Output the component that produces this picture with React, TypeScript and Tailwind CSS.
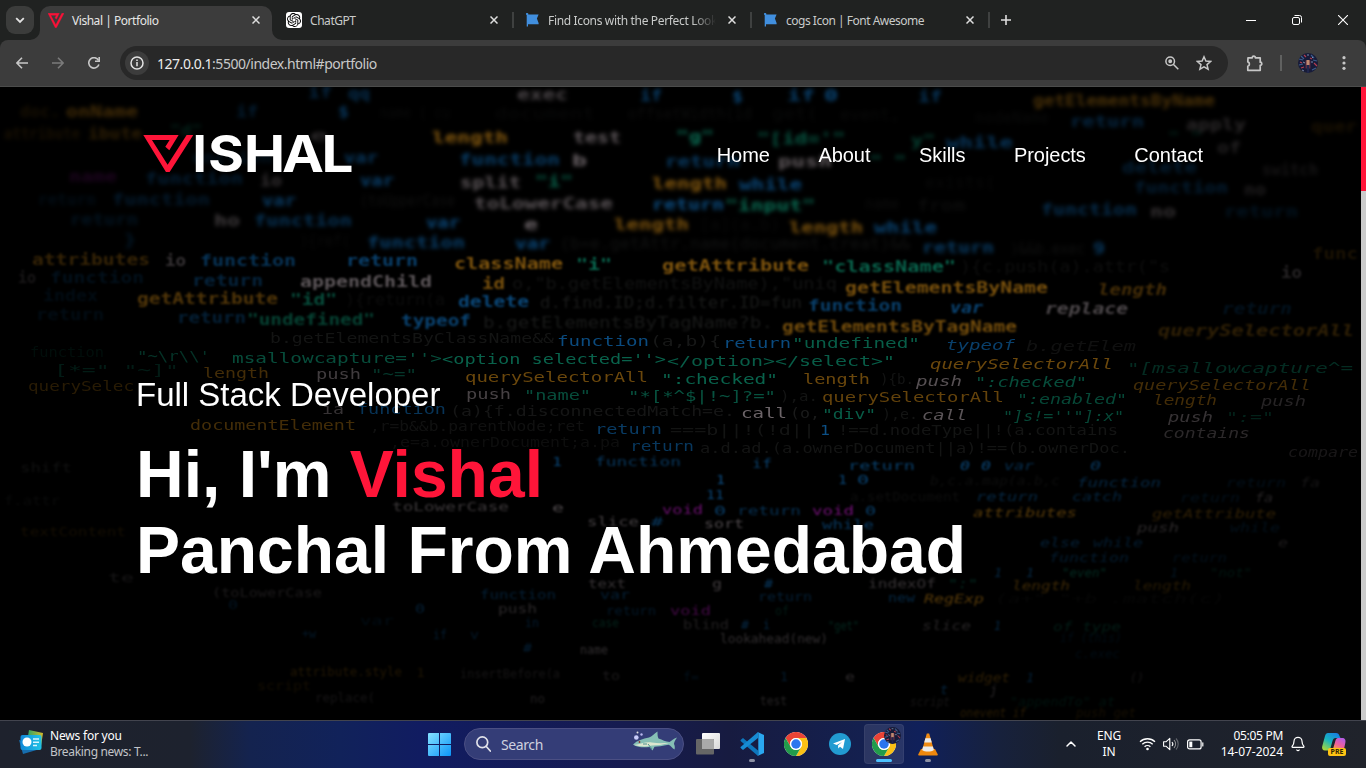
import React from "react";
import { SiOpenai } from "react-icons/si";
import { ChevronUp, Bell } from "lucide-react";

type Tone = "o" | "b" | "t" | "g" | "m" | "f";
type Token = [number, number, number, string, Tone, number];

const tones: Record<Tone, string> = {
  o: "#85590f",
  b: "#0c4f85",
  t: "#0a6d54",
  g: "#6c6468",
  m: "#86158c",
  f: "#3b3d3c",
};

/* x, baseline, width, text, tone, opacity */
const far: Token[] = [
  [517, 100, 51, "exec", "g", 0.7], [640, 101, 22, "if", "b", 0.8], [732, 102, 11, "$", "b", 0.9], [787, 101, 28, "if", "b", 0.8],
  [824, 101, 14, "0", "b", 0.9], [918, 102, 24, "if", "b", 0.7], [308, 98, 24, "if", "b", 0.5], [348, 99, 22, "qq", "b", 0.6],
  [1033, 106, 182, "getElementsByName", "o", 0.55], [20, 117, 40, "doc.", "o", 0.18], [66, 117, 72, "onName", "o", 0.5],
  [236, 117, 22, "if", "b", 0.4], [338, 117, 11, "$", "b", 0.7], [1070, 127, 74, "return", "b", 0.5], [1186, 130, 60, "apply", "g", 0.4],
  [380, 118, 70, "name ( cu", "f", 0.3], [495, 119, 100, "document", "f", 0.3], [628, 119, 124, "offsetWidth(id", "f", 0.4],
  [772, 119, 46, "get(", "f", 0.3], [840, 120, 60, "event,", "f", 0.3], [975, 123, 74, "nodeName", "f", 0.3], [1311, 132, 46, "quer", "o", 0.2],
  [4, 139, 76, "attribute", "o", 0.18], [88, 139, 54, "ibute", "o", 0.35], [170, 136, 32, '"d"', "t", 0.3], [310, 141, 18, "e", "g", 0.4],
  [432, 143, 76, "length", "o", 1], [573, 143, 48, "test", "g", 0.9], [676, 142, 38, '"g"', "t", 1], [757, 144, 88, `"[id='"`, "t", 0.8],
  [911, 146, 24, 'y"', "t", 0.6], [946, 148, 67, "while", "b", 0.7], [1168, 143, 34, '" "', "t", 0.3], [1217, 153, 24, "of", "g", 0.35],
  [192, 163, 80, "unction", "b", 0.25], [344, 163, 34, "var", "b", 0.7], [459, 165, 101, "function", "b", 0.8], [572, 166, 15, "b", "g", 1],
  [665, 167, 75, "return", "b", 0.75], [778, 167, 54, "push", "g", 0.9], [870, 167, 36, '" "', "t", 0.7], [1122, 173, 75, "delete", "b", 0.4], [1262, 175, 56, "switch", "g", 0.2],
  [69, 182, 48, "name", "m", 0.22], [145, 184, 98, "function", "b", 0.4], [260, 186, 22, "io", "g", 0.5], [360, 186, 34, "var", "b", 0.8],
  [460, 188, 61, "split", "g", 0.85], [535, 187, 38, '"i"', "t", 0.9], [652, 189, 75, "length", "o", 1], [739, 190, 63, "while", "b", 0.9],
  [1134, 193, 94, "function", "b", 0.4], [1244, 195, 22, "no", "g", 0.3], [925, 188, 70, "exists(", "f", 0.3],
  [38, 205, 58, "return", "b", 0.17], [112, 205, 98, "function", "b", 0.35], [262, 206, 34, "var", "b", 0.75], [360, 206, 95, "(toUpperCase", "f", 0.5],
  [474, 209, 139, "toLowerCase", "g", 0.85], [652, 210, 72, "return", "b", 1], [725, 211, 90, '"input"', "t", 1], [865, 209, 34, "name", "f", 0.4],
  [1041, 215, 96, "function", "b", 0.6], [1150, 217, 26, "no", "g", 0.5], [1224, 217, 74, "return", "b", 0.25], [917, 211, 48, "from", "f", 0.5],
  [70, 225, 68, "return", "b", 0.25], [214, 226, 26, "ho", "g", 0.6], [254, 226, 98, "function", "b", 0.65], [426, 228, 34, "var", "b", 0.9],
  [524, 230, 14, "e", "g", 1], [614, 230, 75, "length", "o", 0.95], [789, 233, 74, "length", "o", 0.95], [874, 233, 63, "while", "b", 0.85],
  [700, 230, 80, "[a](a.b)", "f", 0.3], [124, 245, 12, "}", "b", 0.3], [300, 246, 50, "){ref(", "f", 0.35],
  [367, 248, 98, "function", "b", 0.8], [515, 249, 35, "var", "b", 0.9], [560, 249, 350, "(b=e.getAttr.name(document.creat)&&", "f", 0.55],
  [922, 253, 72, "return", "b", 0.75], [1093, 254, 12, "9", "b", 0.7], [1010, 254, 75, ")&&b.exec", "f", 0.5],
];

const mid: Token[] = [
  [32, 265, 118, "attributes", "o", 0.4], [165, 266, 21, "io", "g", 0.5], [200, 266, 96, "function", "b", 0.65], [346, 266, 72, "return", "b", 0.8],
  [454, 269, 109, "className", "o", 0.95], [576, 270, 36, '"i"', "t", 0.95], [662, 271, 147, "getAttribute", "o", 0.95], [822, 272, 134, '"className"', "t", 0.9],
  [960, 272, 210, '){c.push(a).attr("s', "f", 0.4], [1312, 259, 46, "func", "o", 0.2], [1281, 278, 21, "io", "g", 0.35],
  [18, 283, 18, "io", "g", 0.22], [50, 283, 94, "function", "b", 0.2], [192, 286, 71, "return", "b", 0.45], [300, 287, 132, "appendChild", "g", 0.85],
  [482, 289, 23, "id", "o", 0.9], [512, 289, 325, "o,\"b.getElementsByName),\"uniq", "f", 0.55], [845, 293, 203, "getElementsByName", "o", 0.9], [1098, 295, 69, "length", "o", 0.5],
  [137, 304, 141, "getAttribute", "o", 0.6], [290, 305, 47, '"id"', "t", 0.7], [345, 305, 100, "){return(a", "f", 0.35], [458, 307, 71, "delete", "b", 0.9],
  [540, 308, 262, "d.find.ID;d.filter.ID=fun", "f", 0.75], [808, 311, 94, "function", "b", 0.8], [950, 313, 33, "var", "b", 0.85], [1045, 314, 83, "replace", "g", 0.7],
  [43, 301, 55, "index", "b", 0.15], [36, 320, 68, "return", "b", 0.15], [177, 323, 69, "return", "b", 0.4], [247, 325, 128, '"undefined"', "t", 0.6],
  [401, 326, 70, "typeof", "b", 0.85], [483, 328, 290, "b.getElementsByTagName?b.", "f", 0.75], [782, 332, 235, "getElementsByTagName", "o", 0.85],
  [1158, 336, 196, "querySelectorAll", "o", 0.35], [1222, 314, 70, "return", "b", 0.22],
];

const near: Token[] = [
  [270, 343, 284, "b.getElementsByClassName&&", "f", 0.6], [557, 346, 92, "function", "b", 0.95], [650, 346, 71, "(a,b){", "f", 0.7],
  [723, 348, 68, "return", "b", 0.95], [792, 348, 128, '"undefined"', "t", 0.85], [946, 350, 69, "typeof", "b", 0.8], [1026, 351, 110, "b.getElem", "f", 0.5],
  [30, 357, 74, "function", "t", 0.12], [137, 361, 73, `"~\\r\\\\'`, "t", 0.45], [232, 363, 210, "msallowcapture=''>", "t", 0.7], [442, 364, 224, "<option selected=''>", "t", 0.9],
  [667, 366, 228, '</option></select>"', "t", 0.85], [930, 369, 183, "querySelectorAll", "o", 0.8], [1127, 373, 226, '"[msallowcapture^=', "t", 0.4],
  [54, 375, 125, '[*="  "~]"', "t", 0.25], [203, 378, 66, "length", "o", 0.5], [316, 379, 45, "push", "g", 0.6], [371, 379, 46, '"~="', "t", 0.5],
  [465, 382, 183, "querySelectorAll", "o", 0.8], [661, 384, 117, '":checked"', "t", 0.9], [803, 384, 67, "length", "o", 0.8], [880, 384, 34, "){b.", "f", 0.6],
  [916, 386, 46, "push", "g", 0.8], [975, 387, 112, '":checked"', "t", 0.7], [1133, 390, 178, "querySelectorAll", "o", 0.5],
  [28, 391, 106, "querySelec", "o", 0.3],  [466, 399, 45, "push", "g", 0.65], [524, 400, 67, '"name"', "t", 0.7],
  [628, 401, 148, '"*[*^$|!~]?="', "t", 0.75], [780, 401, 38, "),a.", "f", 0.6], [822, 402, 182, "querySelectorAll", "o", 0.75], [1017, 404, 110, '":enabled"', "t", 0.65],
  [1153, 405, 64, "length", "o", 0.5], [1261, 406, 45, "push", "g", 0.35],
  [322, 414, 22, "ia", "g", 0.5], [357, 414, 89, "function", "b", 0.65], [450, 416, 285, "(a){f.disconnectedMatch=e.", "f", 0.65], [741, 418, 46, "call", "g", 1],
  [790, 418, 30, "(o,", "f", 0.8], [822, 419, 54, '"div"', "t", 0.85], [882, 419, 36, "),e.", "f", 0.6], [922, 420, 45, "call", "g", 0.85], [1003, 421, 121, `"]s!=''"]:x"`, "t", 0.65],
  [1168, 422, 45, "push", "g", 0.5], [1226, 422, 48, '":="', "t", 0.3],
  [190, 430, 166, "documentElement", "o", 0.5], [370, 431, 215, ",r=b&&b.parentNode;ret", "f", 0.5], [595, 434, 67, "return", "b", 0.75],
  [670, 435, 145, "===b||!(!d||", "f", 0.6], [820, 435, 10, "1", "b", 1], [838, 435, 280, "!==d.nodeType||!(a.contains", "f", 0.6], [1163, 438, 87, "contains", "g", 0.4],
  [390, 447, 230, ",e=a.ownerDocument;a.pa", "f", 0.4], [630, 451, 64, "return", "b", 0.7], [700, 453, 430, "a.d.ad.(a.ownerDocument||a)!==(b.ownerDoc.", "f", 0.6], [1288, 457, 70, "compare", "g", 0.22],
];

const low: Token[] = [
  [595, 466, 86, "function", "b", 0.7], [552, 466, 10, "1", "b", 0.9], [752, 468, 20, "if", "b", 0.8], [848, 470, 67, "return", "b", 0.8], [960, 470, 10, "0", "b", 0.9], [981, 470, 10, "0", "b", 0.9],
  [1004, 470, 30, "var", "b", 0.6], [1090, 470, 11, "0", "b", 0.7], [20, 472, 52, "shift", "f", 0.5], [716, 484, 9, "1", "b", 1], [838, 484, 9, "1", "b", 0.9], [857, 484, 12, "0", "b", 0.9],
  [930, 485, 130, "b,c.a.map(a.b,c", "f", 0.4], [1077, 487, 84, "function", "b", 0.5], [1226, 487, 60, "return", "b", 0.2], [1300, 487, 20, "fa", "g", 0.2],
  [706, 499, 18, "11", "b", 0.9], [850, 501, 110, "a.setDocument", "f", 0.4], [976, 501, 62, "return", "b", 0.5], [1072, 501, 50, "catch", "b", 0.45],
  [1180, 502, 60, "return", "b", 0.2], [1255, 502, 18, "fa", "g", 0.35], [4, 505, 56, "f.attr", "f", 0.3],
  [392, 511, 117, "toLowerCase", "g", 0.55], [552, 512, 12, "e", "g", 0.7], [662, 514, 41, "void", "m", 0.8], [714, 515, 12, "0", "b", 0.8], [737, 515, 64, "return", "b", 0.6],
  [812, 515, 42, "void", "m", 0.85], [865, 515, 11, "0", "b", 0.8], [973, 517, 104, "attributes", "o", 0.65], [1152, 518, 124, "getAttribute", "o", 0.35],
  [587, 526, 52, "slice", "g", 0.6], [651, 526, 12, "#", "b", 0.7], [704, 528, 40, "sort", "g", 0.7], [822, 529, 52, "while", "b", 0.7], [1137, 532, 42, "push", "g", 0.4], [1230, 532, 50, "while", "b", 0.2],
  [20, 536, 106, "textContent", "o", 0.15], [1040, 547, 40, "else", "b", 0.4], [1093, 547, 50, "while", "b", 0.35], [1278, 547, 10, "e", "g", 0.25],
  [1049, 562, 80, "function", "b", 0.35], [1172, 562, 55, "return", "b", 0.2],
  [1062, 577, 45, '"even"', "t", 0.4], [994, 577, 8, "1", "b", 0.5], [1026, 577, 8, "1", "b", 0.5], [1170, 577, 8, "1", "b", 0.25], [1210, 577, 42, '"not"', "t", 0.2],
  [108, 582, 26, "te", "g", 0.2], [588, 588, 38, "text", "g", 0.5], [712, 588, 10, "g", "g", 0.6],
  [764, 588, 9, "#", "b", 0.7], [868, 588, 68, "indexOf", "g", 0.5], [948, 588, 30, '":"', "t", 0.4], [1012, 590, 58, "length", "o", 0.45], [1133, 590, 58, "length", "o", 0.28],
  [212, 597, 110, "(toLowerCase", "g", 0.25], [480, 599, 76, "function", "b", 0.4], [600, 599, 30, "var", "b", 0.4], [758, 601, 54, "return", "b", 0.4], [888, 602, 27, "new", "b", 0.5], [924, 603, 60, "RegExp", "o", 0.65], [995, 603, 230, "(a+\" \"+b .match(c)", "f", 0.2],
  [228, 609, 10, "0", "b", 0.25], [415, 613, 10, "0", "b", 0.4], [498, 613, 39, "push", "g", 0.4], [606, 615, 50, "return", "b", 0.3], [670, 615, 41, "void", "m", 0.5], [775, 615, 14, "of", "t", 0.25],
  [360, 625, 34, "var", "b", 0.15], [525, 627, 14, "in", "b", 0.35], [592, 627, 27, "case", "t", 0.3], [683, 629, 46, "blind", "g", 0.3], [741, 629, 8, "#", "b", 0.5], [763, 629, 7, "i", "b", 0.5], [828, 630, 31, '"get"', "t", 0.35], [922, 630, 49, "slice", "g", 0.35], [994, 630, 7, "1", "b", 0.5], [1053, 631, 68, "of type", "t", 0.25],
  [302, 638, 14, "+w", "b", 0.3], [433, 639, 14, "if", "b", 0.35], [470, 639, 9, "v", "b", 0.3], [720, 643, 108, "lookahead(new)", "g", 0.45], [1060, 642, 62, "if (this)", "b", 0.15], [523, 652, 9, "#", "b", 0.4], [580, 654, 28, "name", "g", 0.45], [1075, 658, 45, "c.exec", "b", 0.15],
  [290, 676, 112, "attribute.style", "o", 0.25], [416, 677, 9, "1", "o", 0.2], [460, 678, 100, "insertBefore(a", "g", 0.2], [602, 680, 18, "to", "g", 0.25], [845, 681, 10, "e", "g", 0.4], [780, 681, 8, "1", "b", 0.35], [683, 681, 16, "f=", "b", 0.2], [958, 682, 52, "widget", "o", 0.35], [1026, 682, 8, "1", "b", 0.4], [1130, 682, 14, "()", "g", 0.2],
  [257, 690, 54, "script", "o", 0.15], [315, 702, 60, "replace(", "g", 0.2], [530, 703, 15, "no", "g", 0.3], [940, 694, 8, "t", "b", 0.45], [990, 694, 7, "j", "g", 0.4], [760, 705, 27, "test", "g", 0.35], [910, 706, 40, "script", "g", 0.2], [1010, 706, 105, "\"appendTo\" at", "t", 0.17], [960, 717, 66, "onevent if", "o", 0.3], [1076, 717, 60, "push get", "o", 0.17],
];

function CodeLayer({ tokens, size, blur, weight }: { tokens: Token[]; size: number; blur: number; weight: number }) {
  return (
    <g fontFamily="'DejaVu Sans Mono', monospace" fontSize={size} fontWeight={weight} style={{ filter: `blur(${blur}px)` }}>
      {tokens.map(([x, y, w, text, tone, o], i) => (
        <text key={i} x={x} y={y} textLength={w} lengthAdjust="spacingAndGlyphs" fill={tones[tone]} opacity={tone === "f" ? o * 0.55 : o}
          fontWeight={tone === "f" ? 400 : undefined} fontStyle={x > 900 && y > 280 ? "italic" : "normal"}>
          {text}
        </text>
      ))}
    </g>
  );
}

function CodeBackdrop() {
  return (
    <svg aria-hidden="true" className="absolute inset-0 h-full w-full" viewBox="0 87 1361 633" preserveAspectRatio="none">
      <CodeLayer tokens={far} size={16.5} blur={1.9} weight={700} />
      <CodeLayer tokens={mid} size={16} blur={1.1} weight={700} />
      <CodeLayer tokens={near} size={14.5} blur={0.7} weight={400} />
      <CodeLayer tokens={low} size={12.5} blur={1.1} weight={400} />
    </svg>
  );
}

const V_MARK = "M0 0 H106 L78 46 L66 35 L79 15 H26 L73 89 L130 0 H150 L79 111 H68 Z";

function Close() {
  return (
    <svg width="8" height="8" viewBox="0 0 8 8" stroke="#dedede" strokeWidth="1.5" className="shrink-0">
      <path d="M.5 .5l7 7M7.5 .5l-7 7" />
    </svg>
  );
}

function Flag() {
  return (
    <svg width="13" height="14" viewBox="0 0 13 14" fill="#418fde" className="shrink-0">
      <path d="M1.2 0a1 1 0 0 1 1 1.500H12.600l-1.700 4 1.700 4.600v1.200H2v2.300H.7V2A1 1 0 0 1 1.200 0z" />
    </svg>
  );
}

function Tab({ icon, title, textClass }: { icon: React.ReactNode; title: string; textClass: string }) {
  return (
    <div className="mr-[10px] flex h-full w-[228px] items-center">
      <span className="flex w-4 shrink-0 justify-center">{icon}</span>
      <span className={`ml-2 w-[168px] shrink-0 overflow-hidden whitespace-nowrap pt-px text-[12px] leading-4 text-[#c9cbca] ${textClass}`}>{title}</span>
      <span className="ml-[12px] flex"><Close /></span>
      <span className="ml-auto h-4 w-0.5 bg-[#3f4140]" />
    </div>
  );
}

function ChromeLogo({ size }: { size: number }) {
  return (
    <svg width={size} height={size} viewBox="0 0 48 48">
      <circle cx="24" cy="24" r="24" fill="#fff" />
      <path d="M24 12H44.800A24 24 0 0 0 3.200 12L13.600 30A12 12 0 0 1 24 12z" fill="#ea4335" />
      <path d="M34.400 30 24 48A24 24 0 0 0 44.800 12H24A12 12 0 0 1 34.400 30z" fill="#fbc116" />
      <path d="M13.600 30 3.200 12A24 24 0 0 0 24 48L34.400 30A12 12 0 0 1 13.600 30z" fill="#229c4b" />
      <circle cx="24" cy="24" r="12" fill="#fff" />
      <circle cx="24" cy="24" r="9.500" fill="#2a75ee" />
    </svg>
  );
}

function Avatar({ size }: { size: number }) {
  return (
    <svg width={size} height={size} viewBox="0 0 20 20">
      <defs><clipPath id={`av${size}`}><circle cx="10" cy="10" r="10" /></clipPath></defs>
      <g clipPath={`url(#av${size})`}>
        <rect width="20" height="20" fill="#171b38" />
        <path d="M1 6l4 1M3 3l3 3M13 2l3 3M15 7l4 1M1 12l4-1M14 17l4-2" stroke="#3c5c8c" strokeWidth="1.200" />
        <path d="M6 2l2 2M16 10l3 3M3 15l3-1M12 5l2 1M2 9l2 1" stroke="#b53c50" strokeWidth="1.200" />
        <path d="M5 9l2 1M14 4l1 1M13 9h2M4 17l2 1M9 2h2" stroke="#8997b4" strokeWidth=".9" />
        <path d="M7.500 7.500h5v8h-5z" fill="#5b2b42" />
        <path d="M8.500 7h3v5h-3z" fill="#c08a70" />
        <path d="M9 12h2v8H9z" fill="#20264c" />
      </g>
    </svg>
  );
}

function BrowserHeader() {
  return (
    <header className="flex h-[87px] shrink-0 flex-col bg-[#202221]">
      <div className="flex h-10 shrink-0">
        <div className="flex w-10 items-center pl-1.5">
          <div className="flex size-7 items-center justify-center rounded-[9px] bg-[#3b3c3b]">
            <svg width="10" height="7" viewBox="0 0 10 7" fill="none" stroke="#e3e3e3" strokeWidth="1.800"><path d="M1.200 1.200L5 5l3.800-3.800" /></svg>
          </div>
        </div>
        <div className="relative mt-1.5 flex h-[34px] w-[232px] items-center rounded-t-[10px] bg-[#3c3c3c] pb-1.5 pl-2">
          <svg className="absolute -left-2.5 bottom-0" width="10" height="10" viewBox="0 0 10 10" fill="#3c3c3c"><path d="M10 0v10H0A10 10 0 0 0 10 0z" /></svg>
          <svg className="absolute -right-2.5 bottom-0" width="10" height="10" viewBox="0 0 10 10" fill="#3c3c3c"><path d="M0 0v10h10A10 10 0 0 1 0 0z" /></svg>
          <svg width="16" height="15" viewBox="0 -2 150 115" preserveAspectRatio="none" fill="#fb1238" stroke="#fb1238" strokeWidth="3"><path d={V_MARK} /></svg>
          <span className="ml-2 w-[168px] whitespace-nowrap pt-px text-[12px] leading-4 tracking-[-0.46px] text-[#e6e6e6]">Vishal | Portfolio</span>
          <span className="ml-[12px] flex"><Close /></span>
        </div>
        <div className="flex grow items-center pl-[14px]">
          <Tab textClass="tracking-[-0.45px]" title="ChatGPT" icon={<span className="flex size-4 items-center justify-center rounded-[3px] bg-white"><SiOpenai className="size-3.5 text-black" /></span>} />
          <Tab textClass="tracking-[-0.34px] [mask-image:linear-gradient(90deg,#000_86%,transparent)]" title="Find Icons with the Perfect Look & Feel" icon={<Flag />} />
          <Tab textClass="tracking-[-0.49px]" title="cogs Icon | Font Awesome" icon={<Flag />} />
          <svg className="ml-px" width="10" height="10" viewBox="0 0 10 10" stroke="#dedede" strokeWidth="1.600"><path d="M5 0v10M0 5h10" /></svg>
          <div className="ml-auto flex items-center gap-[36px] pr-[18px]">
            <svg width="10" height="10" viewBox="0 0 10 10" stroke="#fff"><path d="M0 5.500h10" /></svg>
            <svg width="10" height="10" viewBox="0 0 10 10" fill="none" stroke="#fff"><rect x=".5" y="2.500" width="7" height="7" rx="1.500" /><path d="M2.500.5h5a2 2 0 0 1 2 2v5" /></svg>
            <svg width="10" height="10" viewBox="0 0 10 10" stroke="#fff" strokeWidth="1.100"><path d="M0 0l10 10M10 0L0 10" /></svg>
          </div>
        </div>
      </div>
      <div className="flex h-[47px] items-center rounded-t-[8px] border-b border-[#4b4c4b] bg-[#3c3c3c] pl-4">
        <svg width="12" height="12" viewBox="0 0 12 12" fill="none" stroke="#c7c7c7" strokeWidth="1.600"><path d="M12 6H1M6 .8L.9 6 6 11.200" /></svg>
        <svg className="ml-6" width="12" height="12" viewBox="0 0 12 12" fill="none" stroke="#7b7b7b" strokeWidth="1.600"><path d="M0 6h11M6 .8L11.100 6 6 11.200" /></svg>
        <svg className="ml-6" width="12" height="12" viewBox="0 0 12 12" fill="none" stroke="#c7c7c7" strokeWidth="1.600"><path d="M10.900 7.500A5.200 5.200 0 1 1 10.500 3.300" /><path d="M11.200 0v4.200H7" /></svg>
        <div className="ml-5 flex h-[34px] w-[1108px] items-center rounded-full bg-[#282828] pl-[5px] pr-4">
          <span className="flex size-6 items-center justify-center rounded-full bg-[#3c3c3c]">
            <svg width="14" height="14" viewBox="0 0 14 14" fill="none" stroke="#e3e3e3" strokeWidth="1.500"><circle cx="7" cy="7" r="6" /><path d="M7 6v4.200M7 3.500v1.500" /></svg>
          </span>
          <span className="ml-2 text-[14px] tracking-[-0.47px] text-[#c9c9c9]"><span className="text-[#ececec]">127.0.0.1</span>:5500/index.html#portfolio</span>
          <svg className="ml-auto" width="14" height="14" viewBox="0 0 14 14" fill="none" stroke="#c7c7c7" strokeWidth="1.500"><circle cx="5.200" cy="5.200" r="4.300" /><path d="M8.300 8.300L13.300 13.300" /><circle cx="5.200" cy="5.200" r="1.200" fill="#c7c7c7" /></svg>
          <svg className="ml-[17px]" width="16" height="16" viewBox="0 0 16 16" fill="none" stroke="#c7c7c7" strokeWidth="1.500"><path d="M8 1.800l1.900 4.300 4.700.4-3.600 3.100 1.100 4.600L8 11.800l-4.100 2.400L5 9.600 1.400 6.500l4.700-.4z" /></svg>
        </div>
        <svg className="ml-[18px]" width="18" height="17" viewBox="0 0 18 17" fill="none" stroke="#c7c7c7" strokeWidth="1.700"><path d="M2 2.800h4.200a1.600 1.600 0 0 1 3.200 0h4.800v4.400a1.600 1.600 0 0 1 0 3.200v4.900H1.800v-4a2.300 2.300 0 0 0 0-4.400z" strokeLinejoin="round" /></svg>
        <span className="ml-4 h-4 w-0.5 bg-[#606160]" />
        <span className="ml-4"><Avatar size={20} /></span>
        <svg className="ml-6" width="4" height="14" viewBox="0 0 4 14" fill="#c7c7c7"><circle cx="2" cy="1.700" r="1.600" /><circle cx="2" cy="7" r="1.600" /><circle cx="2" cy="12.300" r="1.600" /></svg>
      </div>
    </header>
  );
}

function Portfolio() {
  return (
    <main className="flex h-[633px] shrink-0 bg-black">
      <section className="relative h-full w-[1361px] overflow-hidden font-['Liberation_Sans',Arial,sans-serif] text-white">
        <CodeBackdrop />
        <div className="relative flex flex-col pl-[136px] pr-[158px]">
          <nav className="flex h-[136px] items-center justify-between">
            <svg className="-mt-0.5 ml-[7px]" width="212" height="40" viewBox="0 0 212 40" role="img" aria-label="Vishal">
              <g transform="translate(.3 1) scale(.3333)" fill="#ff1539"><path d={V_MARK} /></g>
              <g fill="#fff" fontFamily="Inter, 'Liberation Sans', sans-serif" fontWeight="700" fontSize="51">
                <text x="49.500" y="38">I</text>
                <text x="65" y="38" textLength="36" lengthAdjust="spacingAndGlyphs">S</text>
                <text x="101" y="38" textLength="41" lengthAdjust="spacingAndGlyphs">H</text>
                <text x="139" y="38" textLength="42" lengthAdjust="spacingAndGlyphs">A</text>
                <text x="178.500" y="38" textLength="32" lengthAdjust="spacingAndGlyphs">L</text>
              </g>
            </svg>
            <div className="flex gap-[48.500px] text-[20px] leading-6 tracking-[-0.04px]">
              <a>Home</a><a>About</a><a>Skills</a><a>Projects</a><a>Contact</a>
            </div>
          </nav>
          <p className="mt-[153px] text-[33px] leading-[38px]">Full Stack Developer</p>
          <h1 className="mt-[22px] whitespace-nowrap text-[66px] font-bold leading-[76px]">
            Hi, I'm <span className="text-[#ff1539]">Vishal</span>
            <br />
            Panchal From Ahmedabad
          </h1>
        </div>
      </section>
      <div className="h-full w-[5px] bg-[#cbcbcb]"><div className="h-[104px] bg-[#ff1539]" /></div>
    </main>
  );
}

function Shark() {
  return (
    <svg width="46" height="22" viewBox="0 0 46 22">
      <path d="M1 13.500c4-4 10-6 16-7 3-1 5-4 8.500-6 0 3 0 5 1 7 4 1 7 3.500 11 3.500 2-1 4-3.500 7.500-4.500-2 3-3 5-3 6.500 1 2 1 4 .5 5.500-2-1-4-4.500-6-4.800-6 1-11 2-14 2l-2 3.800-3-3.500c-5 .5-11 1-16.500-2.500z" fill="#86bfb5" />
      <path d="M2 14c7-1 12-3.500 18-2.500s12 .5 17 .5c-6 1.700-12 2.500-17 2.500-6 1.500-13 1-18-.5z" fill="#dce6cf" />
      <path d="M16 13l4 5M12 12v2M14 12v2" stroke="#4f908e" />
      <circle cx="7.500" cy="11" r=".9" fill="#8b3030" />
      <circle cx="4.300" cy="6.500" r="2.300" fill="#c9cdfb" /><circle cx="5.500" cy="1.500" r="1" fill="#ddd" /><circle cx="9.500" cy="3.500" r="1.200" fill="#b9b7ed" />
    </svg>
  );
}

function AppSlot({ children, mark }: { children: React.ReactNode; mark?: "idle" | "active" }) {
  return (
    <div className={`relative flex h-10 w-10 items-center justify-center rounded ${mark === "active" ? "bg-white/10 ring-1 ring-inset ring-white/5" : ""}`}>
      {children}
      {mark === "idle" && <span className="absolute bottom-0.5 left-[17px] h-[3px] w-1.5 rounded-full bg-[#8d91a4]" />}
      {mark === "active" && <span className="absolute bottom-0.5 left-3 h-[3px] w-4 rounded-full bg-[#4cc2ff]" />}
    </div>
  );
}

function Taskbar() {
  return (
    <footer className="flex h-12 shrink-0 items-center border-t border-[#42444e] bg-[linear-gradient(90deg,#1e222d_0,#1d222e_190px,#14234f_250px,#11225a_340px,#111c61_420px,#161b50_620px,#171b40_730px,#14204f_860px,#10205a_920px,#17213c_1000px,#1a202d_1060px,#20232b_1366px)] pb-px">
      <svg className="-mt-1 ml-[19px]" width="25" height="26" viewBox="0 0 25 26">
        <defs><linearGradient id="news" x2="1"><stop stopColor="#1189d8" /><stop offset="1" stopColor="#21c4e6" /></linearGradient><linearGradient id="hill" x2="1"><stop stopColor="#26a269" /><stop offset="1" stopColor="#d6bb2a" /></linearGradient></defs>
        <path d="M10 1l14 3-2 13-14-4z" fill="url(#hill)" />
        <path d="M0 11l18 5 3 4-17 5z" fill="#176eae" />
        <rect x="1.500" y="6" width="21" height="15" rx="2" fill="url(#news)" />
        <circle cx="8" cy="13" r="4.500" fill="#fff" />
        <path d="M14 10h6M14 13.300h6M14 16.500h4" stroke="#d9f5ff" strokeWidth="1.500" />
      </svg>
      <div className="ml-[6px] w-[140px] text-[12px] leading-4 tracking-[-0.33px]">
        <div className="tracking-[-0.2px] text-white">News for you</div><div className="text-[#c2c4c8]">Breaking news: T...</div>
      </div>
      <svg className="ml-[238px]" width="23" height="23" viewBox="0 0 23 23">
        <defs><linearGradient id="win" x2="1" y2="1"><stop stopColor="#86e2ff" /><stop offset="1" stopColor="#0b95f8" /></linearGradient></defs>
        <path fill="url(#win)" d="M1 0h10v11H0V1a1 1 0 0 1 1-1zM12 0h10a1 1 0 0 1 1 1v10H12zM0 12h11v11H1a1 1 0 0 1-1-1zM12 12h11v10a1 1 0 0 1-1 1H12z" />
      </svg>
      <div className="ml-[13px] flex h-8 w-[220px] items-center rounded-full border border-[#4b4f83] bg-[#343d77] pl-[11px] pr-[5px]">
        <svg width="15" height="16" viewBox="0 0 15 16" fill="none" stroke="#e1e2ea" strokeWidth="1.700"><circle cx="6.300" cy="6.300" r="5.400" /><path d="M10.300 10.500L14.300 15" strokeLinecap="round" /></svg>
        <span className="ml-[10px] grow text-[14px] tracking-[-0.4px] text-[#cfd1df]">Search</span>
        <span className="-mt-1 flex"><Shark /></span>
      </div>
      <div className="ml-1 flex gap-1">
        <AppSlot><svg width="24" height="24" viewBox="0 0 24 24"><defs><linearGradient id="tv" x2="1" y2="1"><stop stopColor="#fff" /><stop offset="1" stopColor="#d8d8d8" /></linearGradient></defs><rect x="6" y="1" width="18" height="16" rx="1" fill="url(#tv)" /><rect y="7" width="18" height="15.500" rx="1" fill="#666" /><path d="M6 7h11a1 1 0 0 1 1 1v9H6z" fill="#a9a9a9" /></svg></AppSlot>
        <AppSlot mark="idle"><svg width="24" height="24" viewBox="0 0 24 24"><path d="M1.500 7.200L3 6l15 12.500V24L.3 8.800z" fill="#0d76bd" /><path d="M.3 15.200L18 0v6L3 18l-1.500-1.200z" fill="#168bd4" /><path d="M17.500 0L24 3v18l-6.500 3c.6-.4.8-1 .8-1.800V1.800C18.300 1 18 .4 17.500 0z" fill="#2aa7f0" /></svg></AppSlot>
        <AppSlot><ChromeLogo size={24} /></AppSlot>
        <AppSlot><svg width="22" height="22" viewBox="0 0 22 22"><circle cx="11" cy="11" r="11" fill="#229bd1" /><path d="M4 10.500L16 6l-2 10-3-2.200-1.700 1.600-.3-2.800 4-3.700-5.300 3.200z" fill="#fff" /></svg></AppSlot>
        <AppSlot mark="active"><ChromeLogo size={24} /><span className="absolute right-[3px] top-[3px] flex"><Avatar size={17} /></span></AppSlot>
        <AppSlot mark="idle"><svg width="20" height="23" viewBox="0 0 20 23"><path d="M3 16h14l2.800 5.500c0 .9-.4 1-1 1H1.200c-.6 0-1-.1-1-1z" fill="#ee870d" /><path d="M8.800.5h2.400l4.800 17c-3 2.500-9 2.500-12 0z" fill="#f08b13" /><path d="M7.400 5.300h5.200l1.200 4.300H6.200zM5.100 13.400h9.800l1 3.600c-3 2-8.800 2-11.800 0z" fill="#ececec" /></svg></AppSlot>
      </div>
      <div className="ml-auto flex items-center text-white">
        <ChevronUp className="size-4" strokeWidth={2.2} />
        <div className="ml-[16px] w-7 text-center text-[12px] leading-4 tracking-[-0.2px]">ENG<br />IN</div>
        <svg className="ml-[16px]" width="17" height="14" viewBox="0 0 17 14" fill="none" stroke="#fff" strokeWidth="1.300"><path d="M1 4.800a10.800 10.800 0 0 1 15 0M3.300 7.300a7.500 7.500 0 0 1 10.400 0M5.600 9.700a4.200 4.200 0 0 1 5.800 0" /><circle cx="8.500" cy="12" r="1.300" fill="#fff" stroke="none" /></svg>
        <svg className="ml-[7px]" width="16" height="14" viewBox="0 0 16 14" fill="none" stroke="#fff" strokeWidth="1.100"><path d="M.6 4.700h2.600L6.800 1.300v11.400L3.200 9.300H.6z" strokeLinejoin="round" /><path d="M9 5a3 3 0 0 1 0 4" /><path d="M11 3a6 6 0 0 1 0 8" stroke="#999" /><path d="M13 1.500a8 8 0 0 1 0 11" stroke="#62656c" /></svg>
        <svg className="ml-[8px]" width="17" height="11" viewBox="0 0 17 11" fill="none" stroke="#fff" strokeWidth="1.200"><rect x=".6" y=".9" width="13.500" height="9" rx="2" /><path d="M15.800 3.800v3.200" strokeLinecap="round" /><rect x="2.300" y="2.600" width="3" height="5.600" fill="#fff" stroke="none" /></svg>
        <div className="ml-[9px] w-[70px] whitespace-nowrap text-right text-[12px] leading-4 tracking-[-0.3px]">05:05 PM<br /><span className="tracking-[-0.03px]">14-07-2024</span></div>
        <Bell className="ml-[7px] size-4" strokeWidth={1.8} />
        <div className="relative ml-4 mr-[20px] h-6 w-6">
          <svg width="24" height="24" viewBox="0 0 24 24"><defs><linearGradient id="c1" x1=".8" y1="0" x2=".1" y2="1"><stop stopColor="#177ee4" /><stop offset=".5" stopColor="#18b4be" /><stop offset="1" stopColor="#b5d92d" /></linearGradient><linearGradient id="c2" x1=".8" x2=".2" y2="1"><stop stopColor="#b05ce9" /><stop offset=".6" stopColor="#ef609d" /><stop offset="1" stopColor="#f79950" /></linearGradient></defs><path d="M6 1h8c2 0 3 1 3.500 3l1 2h-5c-1.500 0-2.500 1-3 3l-2 7c-.5 2-1 2.500-3 2.500H3C0 18.500-.2 16 .3 14L3 4c.5-2 1.500-3 3-3z" fill="url(#c1)" /><path d="M16 6h4c3 0 4 2 3.300 5L22 17H11l2.500-8.500C14 7 14.700 6 16 6z" fill="url(#c2)" /></svg>
          <span className="absolute bottom-0 left-[6px] h-[8px] w-[18px] rounded-[2px] bg-[#ffc414] text-center text-[7px] font-bold leading-[8px] text-[#302400]">PRE</span>
        </div>
      </div>
    </footer>
  );
}

export default function App() {
  return (
    <div className="flex h-[768px] w-[1366px] flex-col overflow-hidden bg-black font-['Noto_Sans','Open_Sans',sans-serif]">
      <BrowserHeader />
      <Portfolio />
      <Taskbar />
    </div>
  );
}
